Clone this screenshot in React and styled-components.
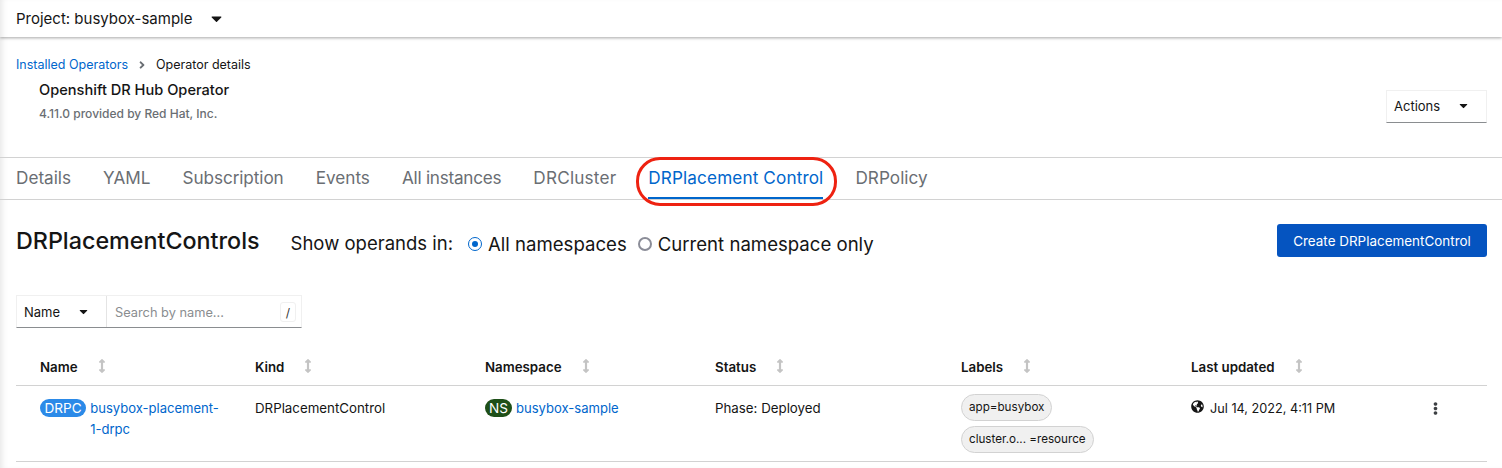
import React from "react"
import styled, { createGlobalStyle } from "styled-components"
import { FaAngleRight, FaArrowsAltV, FaCaretDown, FaEllipsisV, FaGlobeAmericas } from "react-icons/fa"

const GlobalStyle = createGlobalStyle`
  html, body {
    margin: 0;
    background: #fff;
    color: #151515;
    font-family: Inter, "Liberation Sans", sans-serif;
  }
  * { box-sizing: border-box; }
`

const Page = styled.div`
  width: 1502px;
  height: 468px;
  overflow: hidden;
  position: relative;
  box-shadow: inset 6px 0 6px -4px rgba(0, 0, 0, 0.1);
`
const TopBar = styled.div`
  height: 37px;
  display: flex;
  align-items: center;
  padding-left: 16px;
  font-size: 15px;
  box-shadow: 0 1px 3px rgba(0, 0, 0, 0.35);
`
const ProjectCaret = styled(FaCaretDown)`
  margin-left: 16px;
  font-size: 17px;
`
const Header = styled.div`
  height: 120px;
  padding: 20px 15px 0 16px;
  display: flex;
  justify-content: space-between;
`
const Crumbs = styled.div`
  display: flex;
  align-items: center;
  font-size: 12.5px;
  line-height: 16px;
`
const CrumbLink = styled.a`
  color: #06c;
`
const CrumbArrow = styled(FaAngleRight)`
  margin: 0 8px;
  color: #6a6e73;
  font-size: 12px;
`
const Title = styled.div`
  margin: 7px 0 0 23px;
  font-size: 14.6px;
  line-height: 20px;
  font-weight: 500;
`
const Sub = styled.div`
  margin: 6px 0 0 23px;
  font-size: 12px;
  line-height: 16px;
  color: #6a6e73;
  font-weight: 500;
`
const ActionsButton = styled.div`
  margin-top: 33px;
  width: 101px;
  height: 33px;
  display: flex;
  align-items: center;
  justify-content: space-between;
  padding: 0 16px 2px 7px;
  font-size: 13px;
  border: 1px solid #f0f0f0;
  border-bottom-color: #8a8d90;
`
const Tabs = styled.div`
  height: 43px;
  display: flex;
  gap: 32px;
  padding-left: 16px;
  border-top: 1px solid #d2d2d2;
  border-bottom: 1px solid #d2d2d2;
`
const Tab = styled.div`
  position: relative;
  font-size: 17.17px;
  letter-spacing: ${props => props.$track}px;
  line-height: 40px;
  height: 41px;
  color: ${props => (props.$active ? "#06c" : "#6a6e73")};
  border-bottom: 2px solid ${props => (props.$active ? "#06c" : "transparent")};
`
const Callout = styled.span`
  position: absolute;
  left: -12px;
  right: -14px;
  top: -1px;
  height: 49px;
  border: 3px solid #ee2211;
  border-radius: 24px;
`
const Toolbar = styled.div`
  height: 95px;
  padding: 24px 15px 0 16px;
  display: flex;
  align-items: flex-start;
`
const Heading = styled.h1`
  margin: 0;
  font-size: 23.3px;
  line-height: 33px;
  font-weight: 500;
`
const ShowLabel = styled.span`
  margin-left: 31px;
  font-size: 18.5px;
  line-height: 39px;
`
const Radio = styled.span`
  width: 14px;
  height: 14px;
  border-radius: 50%;
  background: #fff;
  border: ${props => (props.$checked ? "1.5px solid #06c" : "2px solid #8b8d98")};
  display: flex;
  align-items: center;
  justify-content: center;
  &::after {
    content: "";
    width: 6px;
    height: 6px;
    border-radius: 50%;
    background: ${props => (props.$checked ? "#06c" : "transparent")};
  }
`
const RadioLabel = styled.label`
  display: flex;
  align-items: center;
  gap: 6px;
  height: 39px;
  font-size: 18.6px;
  margin-left: ${props => props.$gap}px;
`
const CreateButton = styled.div`
  margin-left: auto;
  width: 210px;
  height: 33px;
  border-radius: 3px;
  background: #0554c0;
  color: #fff;
  font-size: 13.45px;
  display: flex;
  align-items: center;
  justify-content: center;
`
const Filter = styled.div`
  margin-left: 16px;
  width: 286px;
  height: 33px;
  display: flex;
  border: 1px solid #f0f0f0;
  border-bottom-color: #8a8d90;
`
const FilterSelect = styled.div`
  width: 90px;
  display: flex;
  align-items: center;
  justify-content: space-between;
  padding: 0 16px 0 7px;
  font-size: 13px;
  border-right: 1px solid #e4e4e4;
`
const FilterInput = styled.div`
  flex: 1;
  display: flex;
  align-items: center;
  justify-content: space-between;
  padding: 1px 5px 0 8px;
  font-size: 12.8px;
  color: #8a8d90;
`
const SlashKey = styled.span`
  width: 16px;
  height: 20px;
  border: 1px solid #f0f0f0;
  border-radius: 3px;
  color: #333;
  font-size: 12px;
  display: flex;
  align-items: center;
  justify-content: center;
`
const Table = styled.div`
  margin: 25px 15px 0 16px;
`
const Row = styled.div`
  display: grid;
  grid-template-columns: 239px 230px 230px 246px 230px 1fr;
  border-bottom: 1px solid #d2d2d2;
`
const HeadRow = styled(Row)`
  height: 33px;
  padding-top: 5px;
`
const BodyRow = styled(Row)`
  height: 76px;
  padding-top: 12px;
`
const HeadCell = styled.div`
  display: flex;
  align-items: flex-start;
  padding-left: ${props => (props.$first ? 24 : 0)}px;
  font-size: 13.3px;
  line-height: 18px;
  font-weight: 600;
`
const SortIcon = styled(FaArrowsAltV)`
  margin: 1px 0 0 17px;
  color: #c4c4c4;
  font-size: 14px;
`
const Cell = styled.div`
  font-size: 13.3px;
  line-height: 21px;
  padding-left: ${props => (props.$first ? 24 : 0)}px;
`
const NameCell = styled(Cell)`
  display: flex;
  align-items: flex-start;
  gap: 4px;
`
const Badge = styled.span`
  flex: none;
  height: 18px;
  padding: 0 ${props => props.$pad}px;
  margin-top: 1px;
  border-radius: 9px;
  color: #fff;
  background: ${props => props.$color};
  font-size: 13.6px;
  line-height: 18px;
`
const Link = styled.a`
  color: #06c;
  font-size: 13.05px;
  width: ${props => (props.$wrap ? "135px" : "auto")};
`
const Chips = styled.div`
  display: flex;
  flex-direction: column;
  align-items: flex-start;
  gap: 5px;
  margin-top: -4px;
`
const Chip = styled.span`
  height: 27px;
  padding: 0 7px;
  border-radius: 14px;
  border: 1px solid #d2d2d2;
  background: #f0f0f0;
  font-size: 11.65px;
  line-height: 25px;
`
const UpdatedCell = styled(Cell)`
  display: flex;
  align-items: flex-start;
  justify-content: space-between;
  padding-right: 45px;
  font-size: 12.7px;
`
const Updated = styled.span`
  display: flex;
  gap: 6px;
`
const Globe = styled(FaGlobeAmericas)`
  font-size: 13px;
  margin-top: 2px;
`
const Kebab = styled(FaEllipsisV)`
  font-size: 13px;
  margin-top: 4px;
  color: #3c3f42;
`

const columns = ["Name", "Kind", "Namespace", "Status", "Labels", "Last updated"]
const tabs = [
  { name: "Details", track: 0 },
  { name: "YAML", track: 0 },
  { name: "Subscription", track: -0.08 },
  { name: "Events", track: 0 },
  { name: "All instances", track: -0.25 },
  { name: "DRCluster", track: 0.2 },
  { name: "DRPlacement Control", track: 0.12, active: true },
  { name: "DRPolicy", track: 0.05 },
]

export default function App() {
  return (
    <Page>
      <GlobalStyle />
      <TopBar>
        Project: busybox-sample
        <ProjectCaret />
      </TopBar>
      <Header>
        <div>
          <Crumbs>
            <CrumbLink>Installed Operators</CrumbLink>
            <CrumbArrow />
            Operator details
          </Crumbs>
          <Title>Openshift DR Hub Operator</Title>
          <Sub>4.11.0 provided by Red Hat, Inc.</Sub>
        </div>
        <ActionsButton>
          Actions
          <FaCaretDown />
        </ActionsButton>
      </Header>
      <Tabs>
        {tabs.map(tab => (
          <Tab key={tab.name} $active={tab.active} $track={tab.track}>
            {tab.name}
            {tab.active && <Callout />}
          </Tab>
        ))}
      </Tabs>
      <Toolbar>
        <Heading>DRPlacementControls</Heading>
        <ShowLabel>Show operands in:</ShowLabel>
        <RadioLabel $gap={15}>
          <Radio $checked />
          All namespaces
        </RadioLabel>
        <RadioLabel $gap={11}>
          <Radio />
          Current namespace only
        </RadioLabel>
        <CreateButton>Create DRPlacementControl</CreateButton>
      </Toolbar>
      <Filter>
        <FilterSelect>
          Name
          <FaCaretDown />
        </FilterSelect>
        <FilterInput>
          Search by name...
          <SlashKey>/</SlashKey>
        </FilterInput>
      </Filter>
      <Table>
        <HeadRow>
          {columns.map((name, i) => (
            <HeadCell key={name} $first={i === 0}>
              {name}
              <SortIcon />
            </HeadCell>
          ))}
        </HeadRow>
        <BodyRow>
          <NameCell $first>
            <Badge $color="#2b8ae8" $pad={4.5}>DRPC</Badge>
            <Link $wrap>busybox-placement-1-drpc</Link>
          </NameCell>
          <Cell>DRPlacementControl</Cell>
          <NameCell>
            <Badge $color="#1e4f18" $pad={4}>NS</Badge>
            <Link>busybox-sample</Link>
          </NameCell>
          <Cell>Phase: Deployed</Cell>
          <Cell>
            <Chips>
              <Chip>app=busybox</Chip>
              <Chip>cluster.o... =resource</Chip>
            </Chips>
          </Cell>
          <UpdatedCell>
            <Updated>
              <Globe />
              Jul 14, 2022, 4:11 PM
            </Updated>
            <Kebab />
          </UpdatedCell>
        </BodyRow>
      </Table>
    </Page>
  )
}
